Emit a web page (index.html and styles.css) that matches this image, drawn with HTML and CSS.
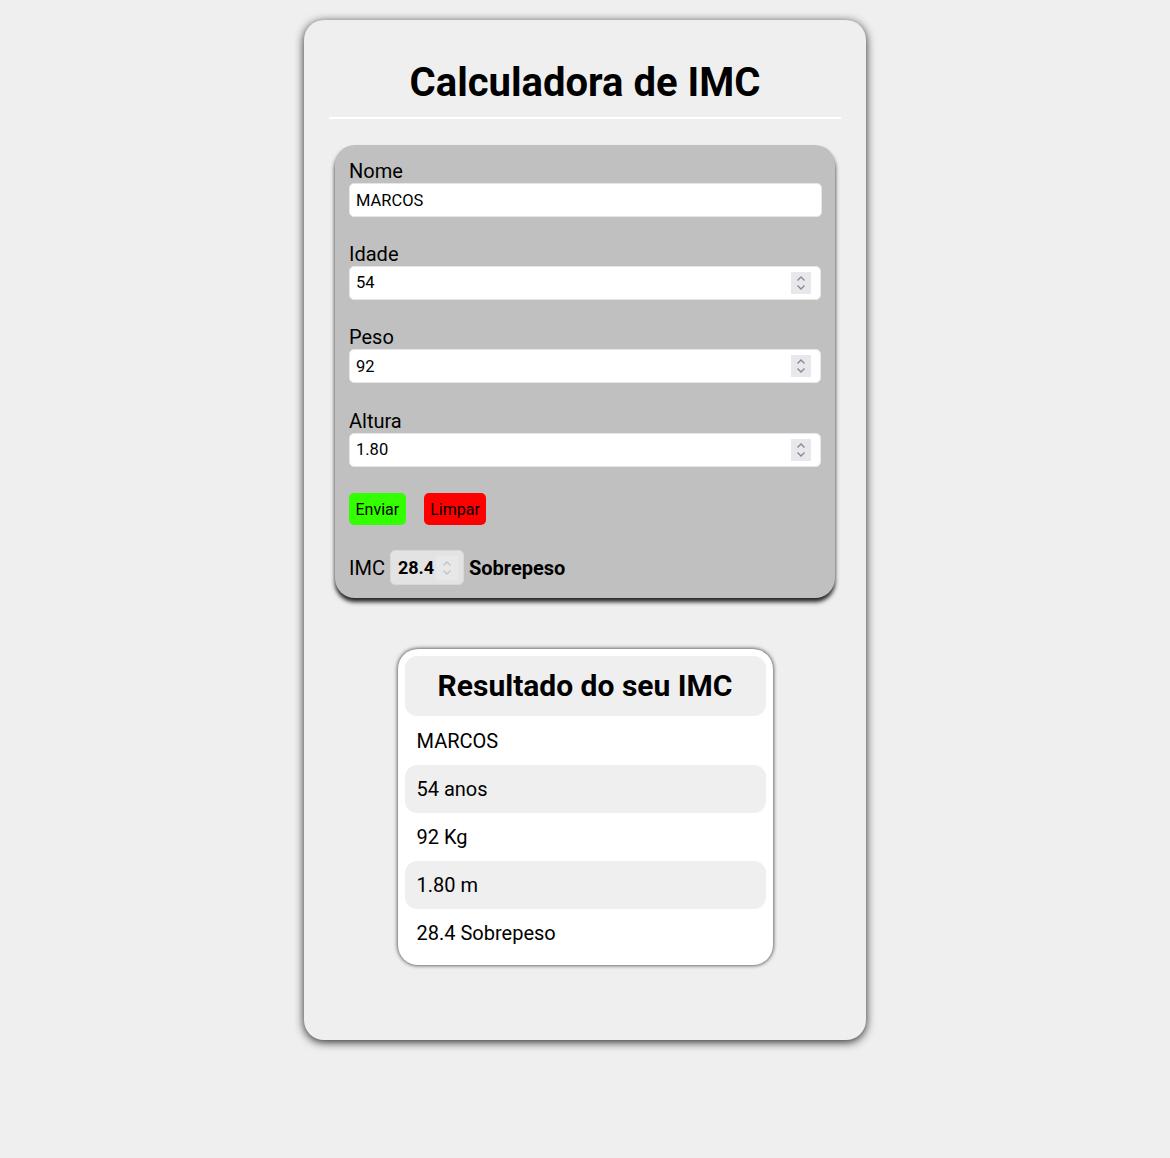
FILE: index.html
```html
<!DOCTYPE html>
<html lang="pt-BR">
<head>
  <meta charset="UTF-8" />
  <meta name="viewport" content="width=device-width, initial-scale=1.0"/>
  <title>Calculadora de IMC</title>
  <link rel="stylesheet" href="styles.css">
</head>
<body>
  <div class="container">
    <h1>Calculadora de IMC</h1>
    <hr>

    <form class="form-imc" id="formImc">
      <div class="campo">
        <label for="nome">Nome</label>
        <input type="text" id="nome" value="MARCOS">
      </div>
      <div class="campo">
        <label for="idade">Idade</label>
        <div class="input-num">
          <input type="number" id="idade" value="54">
          <span class="spin"><svg viewBox="0 0 20 22" width="20" height="22"><path d="M6.5 8.5 L10 5 L13.5 8.5 M6.5 13.5 L10 17 L13.5 13.5" fill="none" stroke="#8a8a8e" stroke-width="1.4"/></svg></span>
        </div>
      </div>
      <div class="campo">
        <label for="peso">Peso</label>
        <div class="input-num">
          <input type="number" id="peso" value="92">
          <span class="spin"><svg viewBox="0 0 20 22" width="20" height="22"><path d="M6.5 8.5 L10 5 L13.5 8.5 M6.5 13.5 L10 17 L13.5 13.5" fill="none" stroke="#8a8a8e" stroke-width="1.4"/></svg></span>
        </div>
      </div>
      <div class="campo">
        <label for="altura">Altura</label>
        <div class="input-num">
          <input type="number" id="altura" value="1.80" step="0.01">
          <span class="spin"><svg viewBox="0 0 20 22" width="20" height="22"><path d="M6.5 8.5 L10 5 L13.5 8.5 M6.5 13.5 L10 17 L13.5 13.5" fill="none" stroke="#8a8a8e" stroke-width="1.4"/></svg></span>
        </div>
      </div>

      <div class="botoes">
        <button type="button" class="btn-enviar">Enviar</button>
        <button type="reset" class="btn-limpar">Limpar</button>
      </div>

      <div class="imc-linha">
        <span>IMC</span>
        <div class="input-num">
          <input type="number" class="imc-valor" value="28.4" disabled>
          <span class="spin spin-off"><svg viewBox="0 0 22 24" width="22" height="24"><path d="M7.5 9.5 L11 6 L14.5 9.5 M7.5 14.5 L11 18 L14.5 14.5" fill="none" stroke="#c4c4c4" stroke-width="1.4"/></svg></span>
        </div>
        <strong>Sobrepeso</strong>
      </div>
    </form>

    <div class="resultado">
      <h2>Resultado do seu IMC</h2>
      <ul>
        <li>MARCOS</li>
        <li>54 anos</li>
        <li>92 Kg</li>
        <li>1.80 m</li>
        <li>28.4 Sobrepeso</li>
      </ul>
    </div>
  </div>
</body>
</html>
```

FILE: styles.css
```css
* {
  box-sizing: border-box;
}

body {
  font-family: Roboto, 'Liberation Sans', sans-serif;
  background-color: #efefef;
  color: #000;
  margin: 0;
  padding: 20px 0;
}

.container {
  width: 562px;
  margin: 0 auto;
  background: #efefef;
  border-radius: 20px;
  box-shadow: 0 2px 10px rgba(0, 0, 0, 0.85);
  padding: 14px 25px 75px;
}

h1 {
  font-size: 40px;
  font-weight: bold;
  text-align: center;
  margin: 25px 0 11px;
}

hr {
  border: none;
  border-top: 2px solid #fff;
  margin: 0 0 26px;
}

.form-imc {
  width: 500px;
  margin: 0 auto;
  background: #c0c0c0;
  border-radius: 20px;
  box-shadow: 0 4px 4px rgba(0, 0, 0, 0.85);
  padding: 15px 14px 13px;
  display: flex;
  flex-direction: column;
}

.campo {
  display: flex;
  flex-direction: column;
  margin-bottom: 26.5px;
}

.campo:first-child {
  margin-bottom: 25.5px;
}

.campo label {
  font-size: 20px;
  line-height: 23px;
}

.campo input {
  width: 473px;
  height: 34px;
  font-family: Roboto, 'Liberation Sans', sans-serif;
  font-size: 16.5px;
  padding: 0 6px;
  border: 1px solid #e6e6e6;
  border-radius: 5px;
  background: #fff;
  -moz-appearance: textfield;
}

input::-webkit-inner-spin-button,
input::-webkit-outer-spin-button {
  -webkit-appearance: none;
  margin: 0;
}

.input-num {
  position: relative;
  display: flex;
}

.spin {
  position: absolute;
  top: 6px;
  right: 10px;
  width: 20px;
  height: 22px;
  background: #e8e8ec;
  display: flex;
}

.botoes {
  display: flex;
  gap: 18px;
  margin-bottom: 25px;
}

.botoes button {
  font-family: Roboto, 'Liberation Sans', sans-serif;
  font-size: 16px;
  height: 32px;
  padding: 0 6.5px;
  border: none;
  border-radius: 5px;
  color: #000;
  cursor: pointer;
}

.btn-enviar {
  background: #33ff00;
}

.btn-limpar {
  background: #ff0000;
}

.imc-linha {
  display: flex;
  align-items: center;
  gap: 5px;
  font-size: 20px;
}

.imc-valor {
  width: 74px;
  height: 35px;
  font-family: Roboto, 'Liberation Sans', sans-serif;
  font-size: 18px;
  font-weight: bold;
  color: #000;
  padding: 0 7px;
  border: 1px solid #d8d8d8;
  border-radius: 5px;
  background: #e3e3e3;
}

.spin-off {
  top: 6px;
  right: 6px;
  width: 22px;
  height: 24px;
  background: #e8e8e8;
}

.resultado {
  width: 375px;
  margin: 51px auto 0;
  background: #fff;
  border-radius: 20px;
  box-shadow: 0 0 4px rgba(0, 0, 0, 0.85);
  padding: 7px 7px 8px;
}

.resultado h2 {
  margin: 0 0 1px;
  background: #efefef;
  border-radius: 12px;
  text-align: center;
  font-size: 30px;
  line-height: 60px;
}

.resultado ul {
  list-style: none;
  margin: 0;
  padding: 0;
}

.resultado li {
  font-size: 20px;
  line-height: 48px;
  padding: 0 12px;
  border-radius: 12px;
}

.resultado li:nth-child(even) {
  background: #efefef;
}
```
